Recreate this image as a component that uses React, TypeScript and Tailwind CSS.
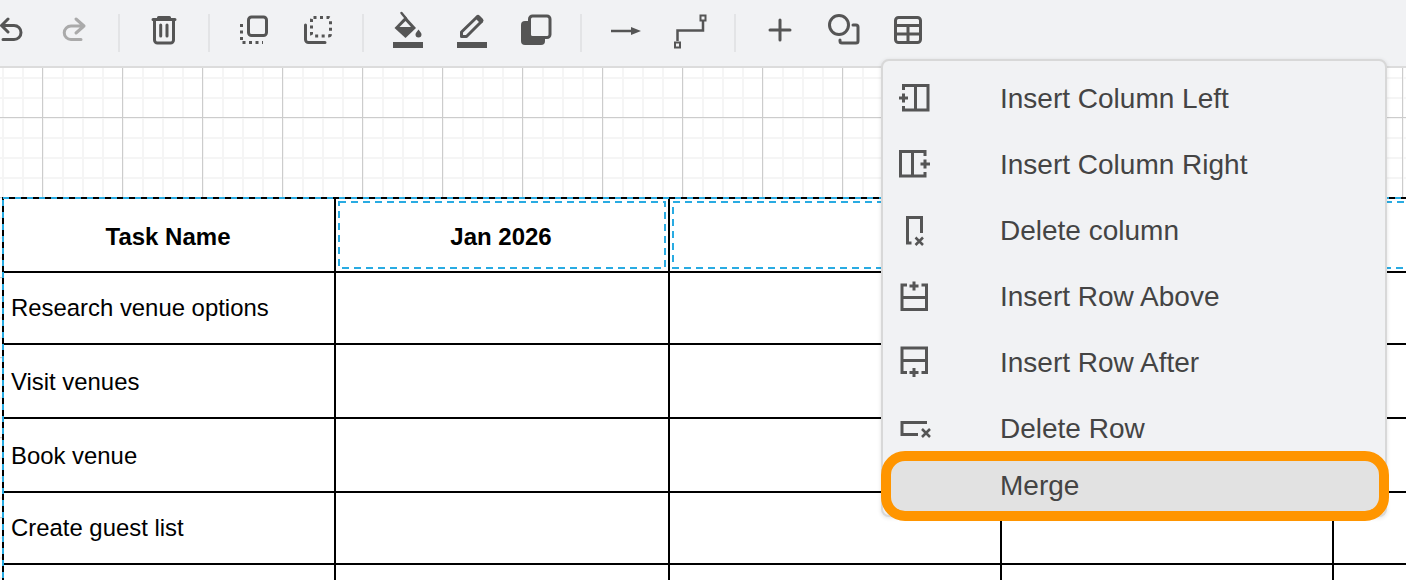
const taskRows = [
  { name: 'Research venue options', height: 'h-[72px]', nudge: '' },
  { name: 'Visit venues', height: 'h-[74px]', nudge: 'pt-[1px]' },
  { name: 'Book venue', height: 'h-[74px]', nudge: 'pt-[1px]' },
  { name: 'Create guest list', height: 'h-[72px]', nudge: '' },
  { name: '', height: 'h-[74px]', nudge: '' },
]

const columns = ['w-[334px]', 'w-[332px]', 'w-[332px]', 'w-[200px]']

function Divider() {
  return <div className="mx-[12px] h-[38px] w-[2px] shrink-0 bg-[#e3e4e6]" />
}

function ToolIcon({ box, children }: { box: string; children: React.ReactNode }) {
  return (
    <div className="flex w-16 shrink-0 justify-center">
      <svg width="40" height="48" viewBox={box} fill="none" stroke="#555555" strokeWidth="3" strokeLinecap="round" strokeLinejoin="round">
        {children}
      </svg>
    </div>
  )
}

function Toolbar() {
  return (
    <div className="flex h-[68px] shrink-0 items-center border-b-2 border-[#dcdcdc] bg-[#f1f2f4]">
      <div className="-ml-[22px] flex items-center">
        <ToolIcon box="-10 9 40 48">
          <path d="M8 19 1.5 25.5 8 32M1.5 25.5H14a7 7 0 0 1 0 14H3" />
        </ToolIcon>
        <ToolIcon box="54 9 40 48">
          <path stroke="#aaaaaa" d="M76 19 84 26 76 33M84 26H71a6.5 6.5 0 0 0 0 13.5H81" />
        </ToolIcon>
        <Divider />
        <ToolIcon box="144 9 40 48">
          <path d="M153 19.5H175M158.5 19V17.5H169.5V19M154.5 20V40a3 3 0 0 0 3 3H170.5a3 3 0 0 0 3-3V20M160.7 25V36M167 25V36" />
        </ToolIcon>
        <Divider />
        <ToolIcon box="234 9 40 48">
          <rect x="248.5" y="17" width="18" height="18.5" rx="3" />
          <path strokeLinecap="butt" strokeDasharray="3 3.5" d="M241.5 24V42.5H263" />
        </ToolIcon>
        <ToolIcon box="298 9 40 48">
          <rect x="311.5" y="17.5" width="19" height="18.5" rx="2" strokeLinecap="butt" strokeDasharray="3 3.5" />
          <path d="M305.5 25V39.5a3 3 0 0 0 3 3H325" />
        </ToolIcon>
        <Divider />
        <ToolIcon box="388 9 40 48">
          <path strokeWidth="2.5" d="M401.5 13 406 18.5" />
          <path fill="#555555" stroke="none" d="M394.5 28 405.5 16.5 416 28 405.5 38Z" />
          <path fill="#f1f2f4" stroke="none" d="M399.5 27 405.5 21 411 27Z" />
          <path fill="#555555" stroke="none" d="M418.5 29.5c2 2.5 3 3.7 3 5a3 3 0 0 1-6 0c0-1.3 1-2.5 3-5Z" />
          <rect x="393" y="42" width="30" height="6" fill="#555555" stroke="none" />
        </ToolIcon>
        <ToolIcon box="452 9 40 48">
          <path d="M461.5 32 477 17 481.5 21.5 466.5 36.5H461.5Z" />
          <path strokeWidth="5" d="M478 17.5 481 20.5" />
          <rect x="457" y="42" width="30" height="6" fill="#555555" stroke="none" />
        </ToolIcon>
        <ToolIcon box="516 9 40 48">
          <rect x="521" y="21" width="24" height="24" rx="4" fill="#555555" stroke="none" />
          <rect x="529.5" y="16" width="20.5" height="21.5" rx="3" fill="#f1f2f4" />
        </ToolIcon>
        <Divider />
        <ToolIcon box="606 9 40 48">
          <path strokeWidth="2.5" strokeLinecap="butt" d="M611 31H633" />
          <path fill="#555555" stroke="none" d="M631 27 641 31 631 35Z" />
        </ToolIcon>
        <ToolIcon box="670 9 40 48">
          <path strokeWidth="2.5" strokeLinecap="butt" strokeLinejoin="miter" d="M703 21V30.5H677.5V41" />
          <rect x="700.5" y="15.5" width="5" height="5" strokeWidth="2" strokeLinejoin="miter" />
          <rect x="675" y="42.5" width="5" height="5" strokeWidth="2" strokeLinejoin="miter" />
        </ToolIcon>
        <Divider />
        <ToolIcon box="760 9 40 48">
          <path d="M770 30H790M780 20V40" />
        </ToolIcon>
        <ToolIcon box="824 9 40 48">
          <circle cx="839" cy="25" r="9.5" />
          <path d="M853 25H856a2 2 0 0 1 2 2V41a2 2 0 0 1-2 2H842a2 2 0 0 1-2-2V40" />
        </ToolIcon>
        <ToolIcon box="888 9 40 48">
          <rect x="895.5" y="17.5" width="25" height="25" rx="3" />
          <path strokeLinecap="butt" d="M896 25.5H920M896 34H920M908 25.5V42" />
        </ToolIcon>
      </div>
    </div>
  )
}

function GanttTable() {
  return (
    <div className="relative w-[1500px]">
      <div className="flex h-[74px]">
        <div className="flex w-[332px] shrink-0 items-center justify-center border-l-2 border-t-2 border-black bg-white pr-[2px] pt-[3px] text-[24px] font-bold text-black">
          Task Name
        </div>
        {columns.map((w, i) => (
          <div key={w + i} className={`relative flex shrink-0 items-center justify-center border-l-2 border-t-2 border-black bg-white pr-[2px] pt-[3px] text-[24px] font-bold text-black ${w}`}>
            {i === 0 && 'Jan 2026'}
            <svg className="absolute inset-[3px] h-[calc(100%-6px)] w-[calc(100%-6px)] overflow-visible" fill="none">
              <rect width="100%" height="100%" stroke="#29abe2" strokeWidth="2" strokeDasharray="7 5" />
            </svg>
          </div>
        ))}
      </div>
      {taskRows.map(row => (
        <div key={row.name} className={`flex ${row.height}`}>
          <div className={`flex w-[332px] shrink-0 items-center border-l-2 border-t-2 border-black bg-white pl-[7px] text-[23.9px] text-black ${row.nudge}`}>
            {row.name}
          </div>
          {columns.map((w, i) => (
            <div key={w + i} className={`shrink-0 border-l-2 border-t-2 border-black bg-white ${w}`} />
          ))}
        </div>
      ))}
      <svg className="absolute left-0 top-0 h-px w-px overflow-visible" fill="none">
        <rect x="1" y="1" width="1600" height="900" stroke="#29abe2" strokeWidth="2" strokeDasharray="6 6" />
      </svg>
    </div>
  )
}

function MenuIcon({ box, children }: { box: string; children: React.ReactNode }) {
  return (
    <svg width="40" height="40" viewBox={box} fill="none" stroke="#555555" strokeWidth="3" strokeLinecap="butt" strokeLinejoin="miter" className="shrink-0">
      {children}
    </svg>
  )
}

const menuItems = [
  {
    label: 'Insert Column Left',
    icon: (
      <MenuIcon box="895 78 40 40">
        <path d="M903.5 90V85.5H928V110H903.5V106M915.5 86V110M899 98H908M903.5 93.5V102.5" />
      </MenuIcon>
    ),
  },
  {
    label: 'Insert Column Right',
    icon: (
      <MenuIcon box="895 144 40 40">
        <path d="M925 156V151.5H900.5V176H925V172M912.5 152V176M920.5 164H930M925 159.5V168.5" />
      </MenuIcon>
    ),
  },
  {
    label: 'Delete column',
    icon: (
      <MenuIcon box="895 210 40 40">
        <path d="M911.5 243H907.5V217.5H921.5V233" />
        <path strokeWidth="2.5" d="M915.5 237.5 923 245M923 237.5 915.5 245" />
      </MenuIcon>
    ),
  },
  {
    label: 'Insert Row Above',
    icon: (
      <MenuIcon box="895 276 40 40">
        <path d="M907 285H902V309.5H926.5V285H921.5M902 297.5H926.5M909.5 286H918.5M914 281.5V290.5" />
      </MenuIcon>
    ),
  },
  {
    label: 'Insert Row After',
    icon: (
      <MenuIcon box="895 342 40 40">
        <path d="M907 372.5H902V348H926.5V372.5H921.5M902 360.5H926.5M909.5 372.5H918.5M914 368V377" />
      </MenuIcon>
    ),
  },
  {
    label: 'Delete Row',
    icon: (
      <MenuIcon box="895 408 40 40">
        <path d="M927 422.5H902V434.5H918" />
        <path strokeWidth="2.5" d="M922 429 930 437M930 429 922 437" />
      </MenuIcon>
    ),
  },
]

function TableMenu() {
  return (
    <div className="absolute left-[881px] top-[59px] z-10 h-[458px] w-[506px] rounded-lg border-2 border-[#d8d8d8] bg-[#f1f2f4] pt-[4px] text-[28px] text-[#444444] shadow-[0_1px_4px_rgba(0,0,0,0.12)]">
      {menuItems.map(item => (
        <div key={item.label} className="flex h-[66px] items-center gap-[65px] pl-[12px]">
          {item.icon}
          <span className="pt-[2px]">{item.label}</span>
        </div>
      ))}
      <div className="relative -ml-[2px] -mr-[4px] -mt-[10px] flex h-[70px] items-center rounded-[24px] border-[10px] border-[#ff9500] bg-[#e2e2e2] pl-[109px]">
        Merge
      </div>
    </div>
  )
}

export default function App() {
  return (
    <div className="relative flex h-[580px] w-[1406px] flex-col overflow-hidden bg-white font-['Liberation_Sans',Arial,sans-serif]">
      <Toolbar />
      <div className="flex-1 bg-[linear-gradient(to_right,#cccccc_1px,transparent_1px),linear-gradient(to_bottom,#cccccc_1px,transparent_1px),linear-gradient(to_right,#f5f5f5_2px,transparent_2px),linear-gradient(to_bottom,#f5f5f5_2px,transparent_2px)] bg-[size:80px_80px,80px_80px,20px_20px,20px_20px] bg-[position:42px_49px,42px_49px,2px_9px,2px_9px] pl-[2px] pt-[129px]">
        <GanttTable />
      </div>
      <TableMenu />
    </div>
  )
}
